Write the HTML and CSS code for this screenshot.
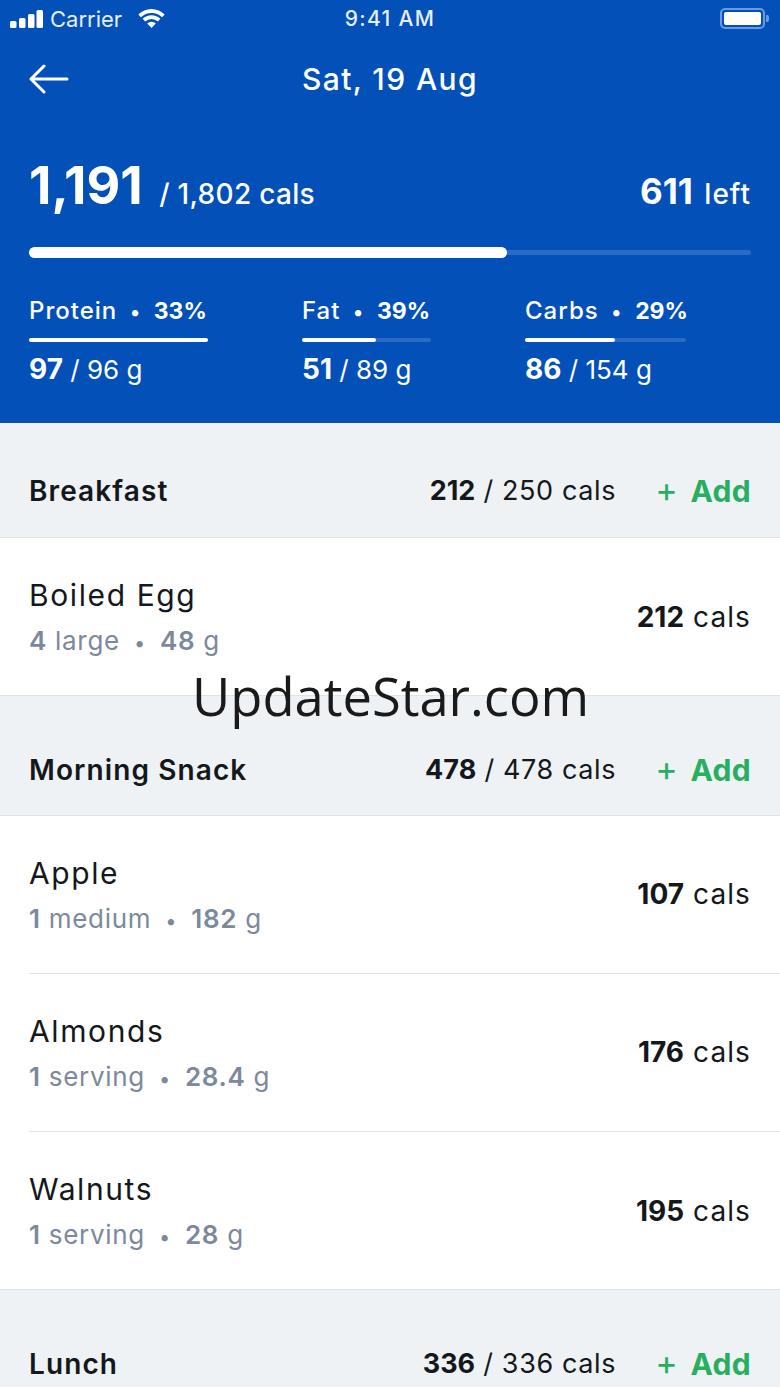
FILE: index.html
```html
<!DOCTYPE html>
<html>
  <head>
    <meta charset="utf-8">
    <title>Sat, 19 Aug</title>
    <link rel="stylesheet" href="styles.css">
  </head>

  <body>
    <header class="summary">
      <div class="status-bar">
        <div class="status-left">
          <svg class="signal" width="33" height="18" viewBox="0 0 33 18">
            <rect x="0" y="11" width="6.500" height="7" rx="1.500"/>
            <rect x="9" y="8" width="6.500" height="10" rx="1.500"/>
            <rect x="18" y="4" width="6.500" height="14" rx="1.500"/>
            <rect x="26.500" y="0" width="6.500" height="18" rx="1.500"/>
          </svg>
          <span>Carrier</span>
          <svg class="wifi" width="29" height="21" viewBox="0 0 29 21">
            <path d="M14.500 5a15 15 0 0 1 10.600 4.300l2.600-2.700A18.800 18.800 0 0 0 14.500 1 18.800 18.800 0 0 0 1.300 6.600l2.600 2.700A15 15 0 0 1 14.500 5z"/>
            <path d="M14.500 11a9 9 0 0 1 6.300 2.500l2.600-2.700a12.700 12.700 0 0 0-17.800 0l2.600 2.700A9 9 0 0 1 14.500 11z"/>
            <path d="M14.500 20l4.300-4.500a6 6 0 0 0-8.600 0z"/>
          </svg>
        </div>
        <div class="status-time">9:41 AM</div>
        <div class="status-right">
          <div class="battery"><div class="battery-fill"></div></div>
          <div class="battery-tip"></div>
        </div>
      </div>

      <div class="nav">
        <svg class="back" width="40" height="32" viewBox="0 0 40 32">
          <path d="M38 16H2M15 3 2 16l13 13"/>
        </svg>
        <h1>Sat, 19 Aug</h1>
        <div></div>
      </div>

      <div class="totals">
        <div><strong class="total-big">1,191</strong> <span class="total-of">/ 1,802 cals</span></div>
        <div class="left"><strong>611</strong> <span>left</span></div>
      </div>
      <div class="main-track"><div class="main-fill" style="width: 66.2%"></div></div>

      <div class="macros">
        <div class="macro macro-protein">
          <div class="macro-name">Protein <i>•</i> <strong>33%</strong></div>
          <div class="track"><div class="fill" style="width: 100%"></div></div>
          <div class="macro-value"><strong>97</strong> / 96 g</div>
        </div>
        <div class="macro macro-fat">
          <div class="macro-name">Fat <i>•</i> <strong>39%</strong></div>
          <div class="track"><div class="fill" style="width: 57%"></div></div>
          <div class="macro-value"><strong>51</strong> / 89 g</div>
        </div>
        <div class="macro macro-carbs">
          <div class="macro-name">Carbs <i>•</i> <strong>29%</strong></div>
          <div class="track"><div class="fill" style="width: 56%"></div></div>
          <div class="macro-value"><strong>86</strong> / 154 g</div>
        </div>
      </div>
    </header>

    <section class="meal-head first">
      <h2>Breakfast</h2>
      <div class="meal-cals"><strong>212</strong> / 250 cals</div>
      <div class="add"><span>+</span> Add</div>
    </section>
    <div class="food">
      <div>
        <div class="food-name">Boiled Egg</div>
        <div class="food-amount"><b>4</b> large <i>•</i> <b>48</b> g</div>
      </div>
      <div class="food-cals"><strong>212</strong> cals</div>
    </div>

    <section class="meal-head">
      <h2>Morning Snack</h2>
      <div class="meal-cals"><strong>478</strong> / 478 cals</div>
      <div class="add"><span>+</span> Add</div>
    </section>
    <div class="food divided">
      <div>
        <div class="food-name">Apple</div>
        <div class="food-amount"><b>1</b> medium <i>•</i> <b>182</b> g</div>
      </div>
      <div class="food-cals"><strong>107</strong> cals</div>
    </div>
    <div class="food divided">
      <div>
        <div class="food-name">Almonds</div>
        <div class="food-amount"><b>1</b> serving <i>•</i> <b>28.4</b> g</div>
      </div>
      <div class="food-cals"><strong>176</strong> cals</div>
    </div>
    <div class="food">
      <div>
        <div class="food-name">Walnuts</div>
        <div class="food-amount"><b>1</b> serving <i>•</i> <b>28</b> g</div>
      </div>
      <div class="food-cals"><strong>195</strong> cals</div>
    </div>

    <section class="meal-head">
      <h2>Lunch</h2>
      <div class="meal-cals"><strong>336</strong> / 336 cals</div>
      <div class="add"><span>+</span> Add</div>
    </section>

    <div class="watermark">UpdateStar.com</div>
  </body>
</html>
```

FILE: styles.css
```css
html, body {
  height: 1387px;
  overflow: hidden;
}

body {
  margin: 0;
  position: relative;
  background: #fff;
  color: #14181c;
  font-family: Inter, "Liberation Sans", sans-serif;
}

i {
  font-style: normal;
}

h1, h2 {
  margin: 0;
}

.summary {
  box-sizing: border-box;
  height: 423px;
  padding: 0 29px;
  background: #0350b8;
  color: #fff;
}

.status-bar {
  display: grid;
  grid-template-columns: 1fr auto 1fr;
  align-items: center;
  height: 37px;
  margin: 0 -19px;
  font-size: 22px;
  color: #e6eefa;
}

.status-left {
  display: flex;
  align-items: center;
  gap: 7px;
}

.signal, .wifi {
  fill: #fff;
}

.wifi {
  margin-left: 8px;
}

.status-time {
  font-size: 21px;
  font-weight: 500;
  letter-spacing: 1.300px;
}

.status-right {
  display: flex;
  align-items: center;
  justify-content: flex-end;
  gap: 1px;
  margin-right: 1px;
}

.battery {
  box-sizing: border-box;
  width: 45px;
  height: 21px;
  padding: 2px;
  border: 2px solid #6a9ae0;
  border-radius: 5px;
}

.battery-fill {
  height: 100%;
  border-radius: 2px;
  background: #fff;
}

.battery-tip {
  width: 3px;
  height: 7px;
  border-radius: 0 2px 2px 0;
  background: #6a9ae0;
}

.nav {
  display: grid;
  grid-template-columns: 1fr auto 1fr;
  align-items: center;
  height: 50px;
  margin-top: 17px;
}

.back {
  fill: none;
  stroke: #fff;
  stroke-width: 3;
  stroke-linecap: round;
  stroke-linejoin: round;
}

.nav h1 {
  font-size: 30px;
  font-weight: 500;
  letter-spacing: 1.400px;
  white-space: nowrap;
}

.totals {
  display: flex;
  align-items: baseline;
  justify-content: space-between;
  margin-top: 50px;
  font-size: 28px;
  font-weight: 500;
}

.total-big {
  font-size: 52px;
  font-weight: 700;
  margin-right: 9px;
}

.total-of {
  letter-spacing: 0.300px;
}

.left strong {
  font-size: 35px;
  font-weight: 700;
  margin-right: 4px;
}

.left span {
  letter-spacing: 1px;
}

.main-track {
  height: 5px;
  margin-top: 33px;
  background: #2a6bc6;
  border-radius: 3px;
}

/* thicker than its track, so it sticks out above and below */
.main-fill {
  height: 11px;
  border-radius: 6px;
  background: #fff;
  transform: translateY(-3px);
}

.track {
  height: 4px;
  background: #2a6bc6;
  border-radius: 2px;
}

.fill {
  height: 100%;
  background: #fff;
  border-radius: 2px;
}

.macros {
  display: flex;
  margin-top: 41px;
}

.macro-protein {
  width: 179px;
  margin-right: 94px;
}

.macro-fat {
  width: 129px;
  margin-right: 94px;
}

.macro-carbs {
  width: 161px;
}

.macro-name {
  font-size: 24px;
  font-weight: 500;
  letter-spacing: 1px;
  white-space: nowrap;
}

.macro-name i {
  margin: 0 5px;
  font-size: 20px;
}

.macro-name strong {
  font-size: 23px;
  font-weight: 700;
  letter-spacing: 0;
}

.macro .track {
  margin-top: 13px;
}

.macro-value {
  margin-top: 10px;
  font-size: 26px;
  white-space: nowrap;
}

.macro-value strong {
  font-size: 28px;
  font-weight: 700;
}

.meal-head {
  display: flex;
  align-items: center;
  box-sizing: border-box;
  height: 121px;
  padding: 28px 29px 0;
  background: #eef2f5;
  border-top: 1px solid #dfe3e8;
  border-bottom: 1px solid #dfe3e8;
  white-space: nowrap;
}

.meal-head.first {
  height: 115px;
  padding-top: 21px;
  border-top: 0;
}

.meal-head h2 {
  flex: 1;
  font-size: 28px;
  font-weight: 600;
  letter-spacing: 1.100px;
}

.meal-cals {
  font-size: 27px;
  letter-spacing: 0.600px;
}

.meal-cals strong {
  font-size: 27px;
  font-weight: 700;
  letter-spacing: 0;
}

.add {
  width: 135px;
  text-align: right;
  color: #27ae60;
  font-size: 30px;
  font-weight: 700;
  letter-spacing: 0.300px;
}

.add span {
  font-size: 34px;
  font-weight: 400;
  line-height: 30px;
  margin-right: 5px;
}

.food {
  display: flex;
  align-items: center;
  justify-content: space-between;
  box-sizing: border-box;
  height: 157px;
  padding: 0 29px;
  white-space: nowrap;
}

.food.divided {
  height: 158px;
  padding-bottom: 2px;
  background: linear-gradient(#dfe3e8, #dfe3e8) 29px 100% / 100% 1px no-repeat;
}

.food-name {
  font-size: 30px;
  letter-spacing: 1.600px;
}

.food-amount {
  margin-top: 12px;
  font-size: 26px;
  letter-spacing: 0.700px;
  color: #7c899d;
}

.food-amount b {
  font-weight: 600;
}

.food-amount i {
  margin: 0 6px;
  font-size: 20px;
}

.food-cals {
  font-size: 28px;
  letter-spacing: 1.100px;
}

.food-cals strong {
  font-weight: 700;
  letter-spacing: 0;
}

.watermark {
  position: absolute;
  top: 662px;
  left: 192px;
  font-family: "Open Sans", sans-serif;
  font-size: 52.500px;
  line-height: 68px;
  color: #1a1a1a;
  white-space: nowrap;
}
```
